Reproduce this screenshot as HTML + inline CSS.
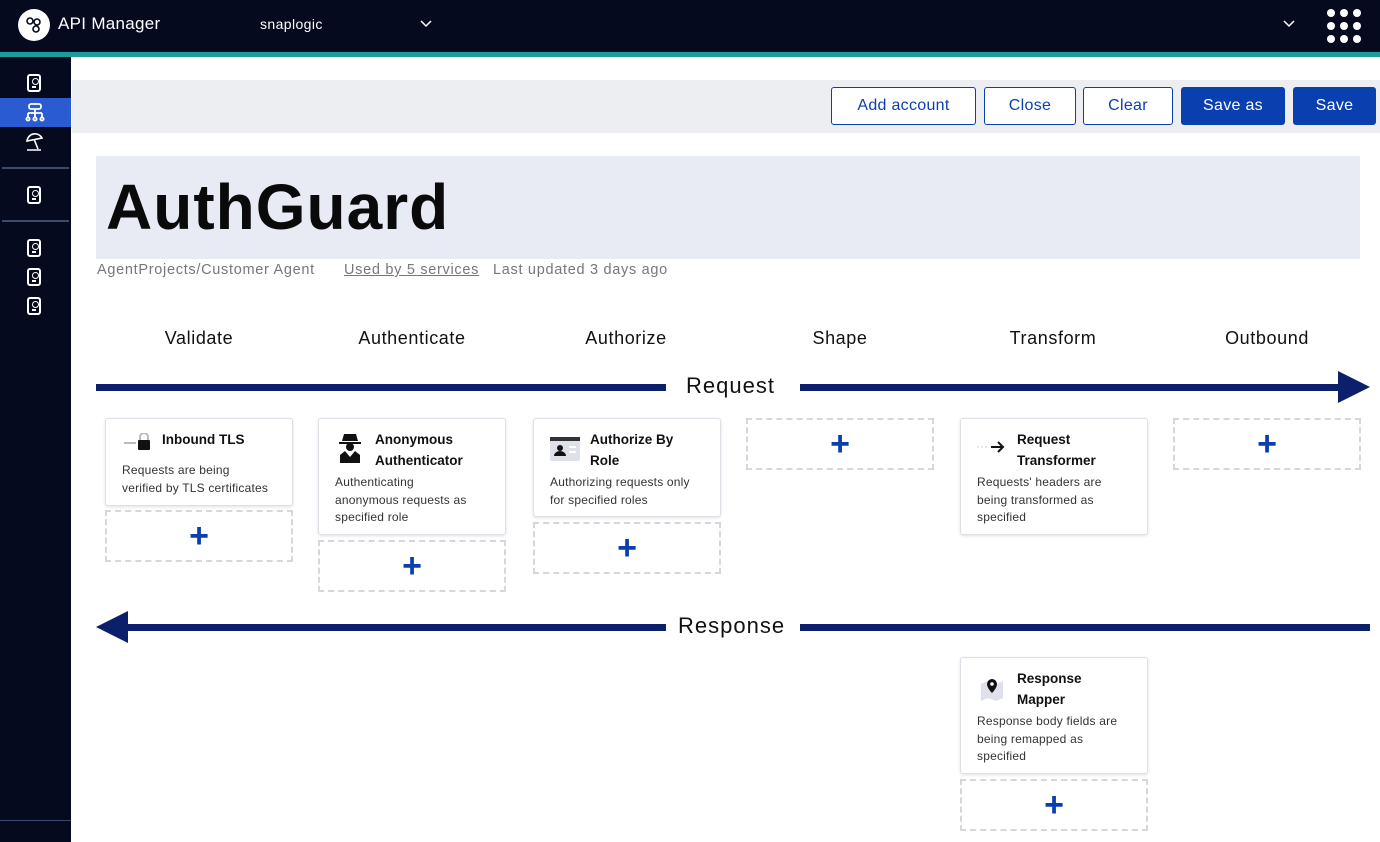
<!DOCTYPE html><html><head><style>
*{box-sizing:border-box;margin:0;padding:0}
body{width:1380px;height:842px;position:relative;overflow:hidden;background:#fff;font-family:"Liberation Sans",sans-serif;color:#111}
.a{position:absolute}
.top{left:0;top:0;width:1380px;height:52px;background:#050a1e}
.teal{left:0;top:52px;width:1380px;height:5px;background:#1c9a9c}
.side{left:0;top:57px;width:71px;height:785px;background:#050a1e}
.ic{width:14px;height:18px;border:2px solid #fff;border-radius:3px;left:27px}
.ic::before{content:"";position:absolute;left:2.5px;top:2px;width:5px;height:5px;border:1.5px solid #fff;border-radius:50%}
.ic::after{content:"";position:absolute;left:3px;top:10px;width:4px;height:1.5px;background:#fff}
.btn{top:87px;height:38px;border:1px solid #0a3fb0;border-radius:3px;background:#fff;color:#0a3fb0;font-size:16px;letter-spacing:.3px;display:flex;align-items:center;justify-content:center}
.btn.p{background:#0a3fb0;color:#fff}
.col{font-size:18px;letter-spacing:.6px;width:214px;text-align:center;top:328px;color:#111}
.card{background:#fff;border:1px solid #dde0e6;border-radius:3px;box-shadow:0 1px 3px rgba(0,0,0,.12);width:188px}
.card b{position:absolute;left:56px;top:10px;font-size:13.5px;line-height:21px;color:#111}
.card p{position:absolute;left:16px;font-size:12px;line-height:17.5px;color:#333;letter-spacing:.2px}
.add{border:2px dashed #d4d7dd;width:188px;height:52px;display:flex;align-items:center;justify-content:center;color:#0a3fb0;font-size:34px;font-weight:bold}
.ln{background:#0b1f6b;height:7px}
.meta{top:262px;font-size:14.5px;color:#777;letter-spacing:.7px}
</style></head><body>
<div class="a top"></div>
<div class="a" style="left:18px;top:9px;width:32px;height:32px;border-radius:50%;background:#fff"></div>
<svg class="a" style="left:24px;top:15px" width="20" height="20" viewBox="0 0 20 20" fill="none" stroke="#050a1e" stroke-width="1.6"><circle cx="6" cy="6" r="3"/><circle cx="13" cy="7" r="3"/><circle cx="12" cy="14" r="3"/></svg>
<div class="a" style="left:58px;top:14px;color:#fff;font-size:17px;letter-spacing:.3px">API Manager</div>
<div class="a" style="left:260px;top:16px;color:#fff;font-size:14px;letter-spacing:.4px">snaplogic</div>
<svg class="a" style="left:419px;top:19px" width="14" height="10"><path d="M2 2l5 5 5-5" stroke="#fff" fill="none" stroke-width="1.5"/></svg>
<svg class="a" style="left:1282px;top:19px" width="14" height="10"><path d="M2 2l5 5 5-5" stroke="#fff" fill="none" stroke-width="1.5"/></svg>
<svg class="a" style="left:1326px;top:8px" width="36" height="36" fill="#fff"><circle cx="5" cy="5" r="4"/><circle cx="18" cy="5" r="4"/><circle cx="31" cy="5" r="4"/><circle cx="5" cy="18" r="4"/><circle cx="18" cy="18" r="4"/><circle cx="31" cy="18" r="4"/><circle cx="5" cy="31" r="4"/><circle cx="18" cy="31" r="4"/><circle cx="31" cy="31" r="4"/></svg>
<div class="a teal"></div>
<div class="a side"></div>
<div class="a" style="left:0;top:98px;width:71px;height:29px;background:#2a5bd0"></div>
<div class="a ic" style="top:74px"></div>
<svg class="a" style="left:25px;top:103px" width="20" height="20" fill="none" stroke="#fff" stroke-width="1.8"><rect x="4" y="1" width="12" height="5" rx="2"/><path d="M10 6v4M3 10h14M3 10v4M10 10v4M17 10v4"/><circle cx="3" cy="16" r="1.6"/><circle cx="10" cy="16" r="1.6"/><circle cx="17" cy="16" r="1.6"/></svg>
<svg class="a" style="left:25px;top:132px" width="20" height="20" fill="none" stroke="#fff" stroke-width="1.6"><path d="M2 9a8 8 0 0 1 15 -3zM9 7l4 10M2 18h14"/></svg>
<div class="a" style="left:2px;top:167px;width:67px;height:2px;background:#3b4a6e"></div>
<div class="a ic" style="top:186px"></div>
<div class="a" style="left:2px;top:220px;width:67px;height:2px;background:#3b4a6e"></div>
<div class="a ic" style="top:239px"></div>
<div class="a ic" style="top:268px"></div>
<div class="a ic" style="top:297px"></div>
<div class="a" style="left:0;top:820px;width:71px;height:1px;background:#3b4a6e"></div>
<div class="a" style="left:72px;top:80px;width:1308px;height:53px;background:#eceef1"></div>
<div class="a btn" style="left:831px;width:145px">Add account</div>
<div class="a btn" style="left:984px;width:92px">Close</div>
<div class="a btn" style="left:1083px;width:90px">Clear</div>
<div class="a btn p" style="left:1181px;width:104px">Save as</div>
<div class="a btn p" style="left:1293px;width:83px">Save</div>
<div class="a" style="left:96px;top:156px;width:1264px;height:103px;background:#e8eaf4"></div>
<div class="a" style="left:106px;top:170px;font-size:64px;font-weight:bold;letter-spacing:1px;color:#0a0a0a">AuthGuard</div>
<div class="a meta" style="left:97px">AgentProjects/Customer Agent</div>
<div class="a meta" style="left:344px;text-decoration:underline">Used by 5 services</div>
<div class="a meta" style="left:493px">Last updated 3 days ago</div>
<div class="a col" style="left:92px">Validate</div>
<div class="a col" style="left:305px">Authenticate</div>
<div class="a col" style="left:519px">Authorize</div>
<div class="a col" style="left:733px">Shape</div>
<div class="a col" style="left:946px">Transform</div>
<div class="a col" style="left:1160px">Outbound</div>
<div class="a ln" style="left:96px;top:384px;width:570px"></div>
<div class="a" style="left:686px;top:373px;font-size:22px;letter-spacing:1px">Request</div>
<div class="a ln" style="left:800px;top:384px;width:545px"></div>
<svg class="a" style="left:1338px;top:371px" width="33" height="33"><path d="M0 0L32 16L0 32z" fill="#0b1f6b"/></svg>
<div class="a card" style="left:105px;top:418px;height:88px"><svg class="a" style="left:18px;top:14px" width="30" height="18"><path d="M0 10h12" stroke="#bbb" stroke-width="2"/><rect x="14" y="7" width="12" height="10" rx="1" fill="#111"/><path d="M16 7v-3a4 4 0 0 1 8 0v3" stroke="#bbb" stroke-width="2" fill="none"/></svg><b>Inbound TLS</b><p style="top:43px">Requests are being<br>verified by TLS certificates</p></div>
<div class="a add" style="left:105px;top:510px">+</div>
<div class="a card" style="left:318px;top:418px;height:117px"><svg class="a" style="left:18px;top:14px" width="26" height="30" fill="#111"><path d="M5 8h16l-2-7h-12zM2 9h22v2H2z"/><circle cx="13" cy="14" r="4"/><path d="M3 30v-8l5-4 5 6 5-6 5 4v8z"/></svg><b>Anonymous<br>Authenticator</b><p style="top:55px">Authenticating<br>anonymous requests as<br>specified role</p></div>
<div class="a add" style="left:318px;top:540px">+</div>
<div class="a card" style="left:533px;top:418px;height:99px"><svg class="a" style="left:16px;top:18px" width="30" height="24"><rect width="30" height="24" rx="2" fill="#dfe1ea"/><rect y="0" width="30" height="4" fill="#333"/><circle cx="10" cy="11" r="3" fill="#111"/><path d="M4 19a6 5 0 0 1 12 0z" fill="#111"/><path d="M19 10h7M19 15h7" stroke="#fff" stroke-width="2"/></svg><b>Authorize By<br>Role</b><p style="top:55px">Authorizing requests only<br>for specified roles</p></div>
<div class="a add" style="left:533px;top:522px">+</div>
<div class="a add" style="left:746px;top:418px">+</div>
<div class="a card" style="left:960px;top:418px;height:117px"><svg class="a" style="left:16px;top:20px" width="30" height="16"><path d="M0 8h10" stroke="#ccc" stroke-dasharray="2 2"/><path d="M14 8h12M21 3l5 5-5 5" stroke="#111" stroke-width="2" fill="none"/></svg><b>Request<br>Transformer</b><p style="top:55px">Requests' headers are<br>being transformed as<br>specified</p></div>
<div class="a add" style="left:1173px;top:418px">+</div>
<div class="a ln" style="left:120px;top:624px;width:546px"></div>
<svg class="a" style="left:96px;top:611px" width="33" height="33"><path d="M32 0L0 16L32 32z" fill="#0b1f6b"/></svg>
<div class="a" style="left:678px;top:613px;font-size:22px;letter-spacing:1px">Response</div>
<div class="a ln" style="left:800px;top:624px;width:570px"></div>
<div class="a card" style="left:960px;top:657px;height:117px"><svg class="a" style="left:18px;top:18px" width="26" height="26"><path d="M2 8l7-3 8 3 7-3v17l-7 3-8-3-7 3z" fill="#dfe1ea"/><path d="M13 3a5 5 0 0 1 5 5c0 4-5 9-5 9s-5-5-5-9a5 5 0 0 1 5-5z" fill="#111"/><circle cx="13" cy="8" r="1.8" fill="#fff"/></svg><b>Response<br>Mapper</b><p style="top:55px">Response body fields are<br>being remapped as<br>specified</p></div>
<div class="a add" style="left:960px;top:779px">+</div>
</body></html>
